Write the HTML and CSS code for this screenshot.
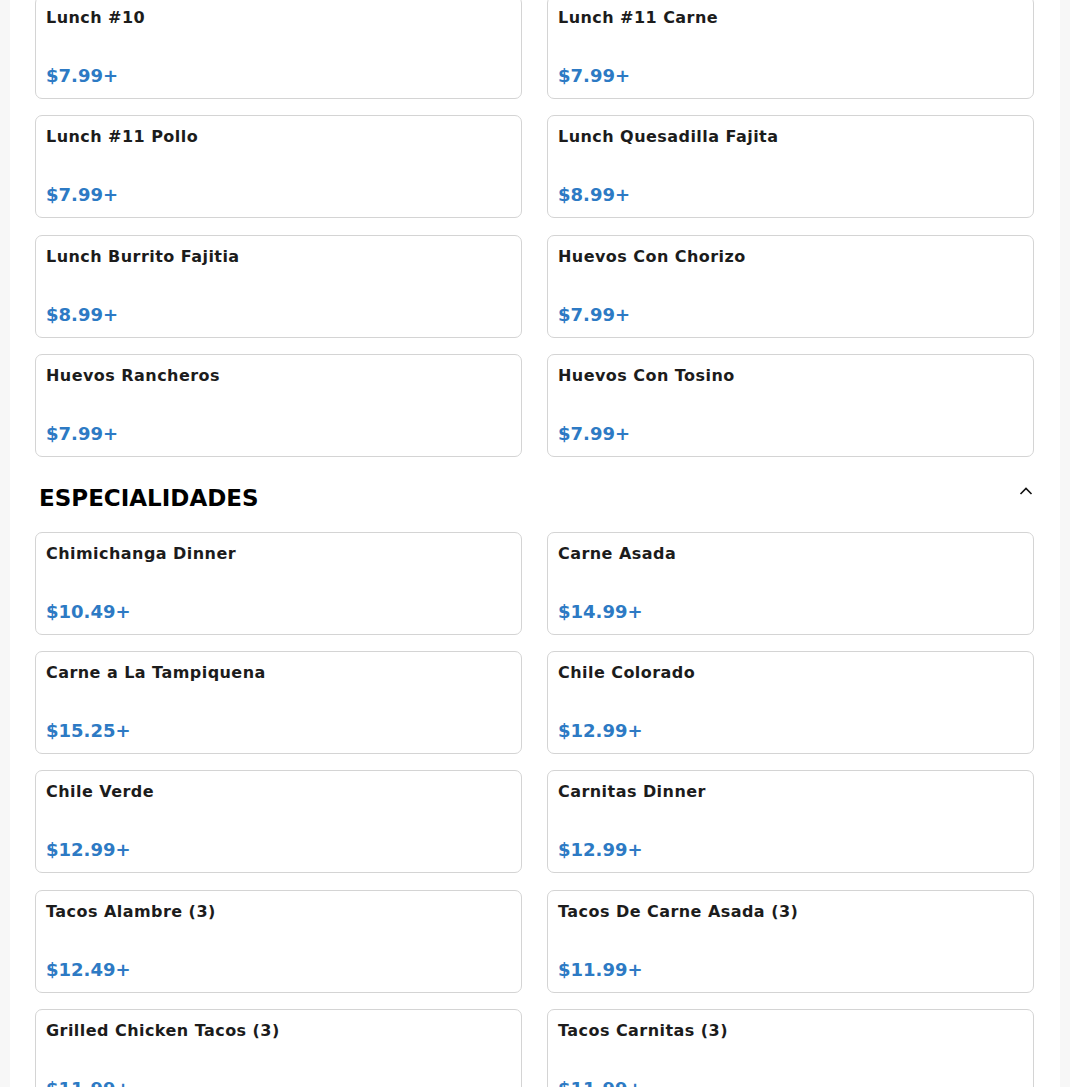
FILE: index.html
```html
<!DOCTYPE html>
<html>
<head>
<meta charset="utf-8">
<link rel="stylesheet" href="styles.css">
</head>
<body>
<div class="page">
  <div class="grid first">
    <div class="card"><div class="name">Lunch #10</div><div class="price">$7.99+</div></div>
    <div class="card"><div class="name">Lunch #11 Carne</div><div class="price">$7.99+</div></div>
    <div class="card"><div class="name">Lunch #11 Pollo</div><div class="price">$7.99+</div></div>
    <div class="card"><div class="name">Lunch Quesadilla Fajita</div><div class="price">$8.99+</div></div>
    <div class="card"><div class="name">Lunch Burrito Fajitia</div><div class="price">$8.99+</div></div>
    <div class="card"><div class="name">Huevos Con Chorizo</div><div class="price">$7.99+</div></div>
    <div class="card"><div class="name">Huevos Rancheros</div><div class="price">$7.99+</div></div>
    <div class="card"><div class="name">Huevos Con Tosino</div><div class="price">$7.99+</div></div>
  </div>
  <div class="section-head">
    <h2 class="section-title">ESPECIALIDADES</h2>
    <svg class="chev" width="16" height="10" viewBox="0 0 16 10"><path d="M2.5 8 L8 2.5 L13.5 8" fill="none" stroke="#111" stroke-width="1.6"/></svg>
  </div>
  <div class="grid">
    <div class="card"><div class="name">Chimichanga Dinner</div><div class="price">$10.49+</div></div>
    <div class="card"><div class="name">Carne Asada</div><div class="price">$14.99+</div></div>
    <div class="card"><div class="name">Carne a La Tampiquena</div><div class="price">$15.25+</div></div>
    <div class="card"><div class="name">Chile Colorado</div><div class="price">$12.99+</div></div>
    <div class="card"><div class="name">Chile Verde</div><div class="price">$12.99+</div></div>
    <div class="card"><div class="name">Carnitas Dinner</div><div class="price">$12.99+</div></div>
    <div class="card"><div class="name">Tacos Alambre (3)</div><div class="price">$12.49+</div></div>
    <div class="card"><div class="name">Tacos De Carne Asada (3)</div><div class="price">$11.99+</div></div>
    <div class="card"><div class="name">Grilled Chicken Tacos (3)</div><div class="price">$11.99+</div></div>
    <div class="card"><div class="name">Tacos Carnitas (3)</div><div class="price">$11.99+</div></div>
  </div>
</div>
</body>
</html>
```
FILE: styles.css
```css
html, body {
  margin: 0;
  padding: 0;
  background: #f7f7f7;
  font-family: "DejaVu Sans", sans-serif;
}
.page {
  margin: 0 10px;
  background: #fff;
  padding: 0 26px 40px 25px;
  min-height: 1200px;
}
.grid {
  display: grid;
  grid-template-columns: 1fr 1fr;
  column-gap: 25px;
  row-gap: 16.25px;
}
.grid.first {
  margin-top: -4px;
}
.card {
  box-sizing: border-box;
  height: 103px;
  border: 1px solid #d4d4d4;
  border-radius: 7px;
  padding: 11px 10px 12px 10px;
  display: flex;
  flex-direction: column;
  justify-content: space-between;
}
.name {
  font-size: 16px;
  font-weight: bold;
  color: #1c1c1c;
  line-height: 19px;
  letter-spacing: 0.45px;
}
.price {
  font-size: 18px;
  font-weight: bold;
  color: #2d7ac4;
  line-height: 21px;
}
.section-head {
  display: flex;
  align-items: flex-start;
  justify-content: space-between;
  padding: 28px 0 20px 4px;
}
.section-title {
  margin: 0;
  font-size: 23px;
  line-height: 27px;
  font-weight: bold;
  color: #000;
  letter-spacing: 0;
}
.chev {
  margin-top: 1px;
  margin-right: 0;
}
```
